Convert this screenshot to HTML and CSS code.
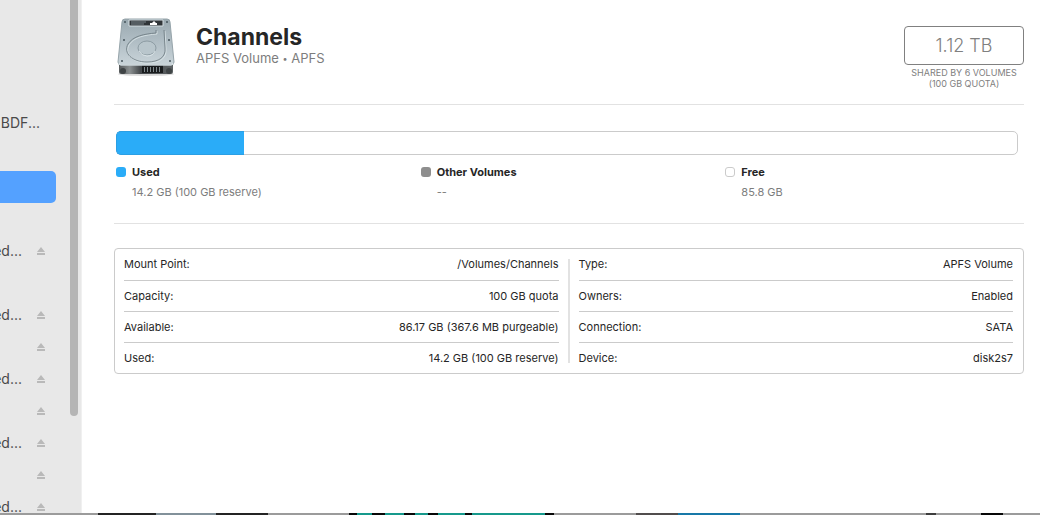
FILE: index.html
```html
<!DOCTYPE html>
<html lang="en">
<head>
    <meta charset="UTF-8">
    <meta name="viewport" content="width=device-width, initial-scale=1.0">
    <title>Channels</title>
    <link rel="stylesheet" href="styles.css">
</head>
<body>
    <svg class="symbols" aria-hidden="true">
        <symbol id="eject" viewBox="0 0 10 10">
            <path d="M5 1 L9 6 H1 Z M1 7 H9 V9 H1 Z" fill="#b9b9b9"/>
        </symbol>
    </svg>

    <div class="window">
        <aside class="sidebar">
            <ul class="volumes">
                <li class="row wide">BDF...</li>
                <li class="row"></li>
                <li class="row selected"></li>
                <li class="row"></li>
                <li class="row"><span>ed...</span><button class="eject" aria-label="Eject"><svg><use href="#eject"/></svg></button></li>
                <li class="row"></li>
                <li class="row"><span>ed...</span><button class="eject" aria-label="Eject"><svg><use href="#eject"/></svg></button></li>
                <li class="row"><button class="eject" aria-label="Eject"><svg><use href="#eject"/></svg></button></li>
                <li class="row"><span>ed...</span><button class="eject" aria-label="Eject"><svg><use href="#eject"/></svg></button></li>
                <li class="row"><button class="eject" aria-label="Eject"><svg><use href="#eject"/></svg></button></li>
                <li class="row"><span>ed...</span><button class="eject" aria-label="Eject"><svg><use href="#eject"/></svg></button></li>
                <li class="row"><button class="eject" aria-label="Eject"><svg><use href="#eject"/></svg></button></li>
                <li class="row"><span>ed...</span><button class="eject" aria-label="Eject"><svg><use href="#eject"/></svg></button></li>
            </ul>
            <div class="scrollbar"></div>
        </aside>

        <main class="content">
            <header class="header">
                <svg class="drive" viewBox="0 0 64 64" aria-hidden="true">
                    <defs>
                        <linearGradient id="plate" x1="0" y1="0" x2="0" y2="1">
                            <stop offset="0" stop-color="#9aa9b0"/>
                            <stop offset="0.5" stop-color="#b1bec5"/>
                            <stop offset="1" stop-color="#c9d4d9"/>
                        </linearGradient>
                        <linearGradient id="front" x1="0" y1="0" x2="1" y2="0">
                            <stop offset="0" stop-color="#55595b"/>
                            <stop offset="0.2" stop-color="#8b9091"/>
                            <stop offset="0.4" stop-color="#43474a"/>
                            <stop offset="1" stop-color="#5d6264"/>
                        </linearGradient>
                    </defs>
                    <ellipse cx="32" cy="59" rx="28" ry="2" fill="#000" opacity="0.15"/>
                    <path d="M5 48 H59 V57 Q59 59 57 59 H7 Q5 59 5 57 Z" fill="url(#front)"/>
                    <path d="M28 50 H49 V58 H28 Z" fill="#191c1e"/>
                    <path d="M30.500 52 V57 M33.500 52 V57 M36.500 52 V57 M39.500 52 V57 M42.500 52 V57 M45.500 52 V57" stroke="#7e888c"/>
                    <circle cx="9" cy="56" r="3" fill="#3f4446"/>
                    <circle cx="55" cy="56" r="3" fill="#3f4446"/>
                    <path d="M11 4 H53 Q56 4 56 7 L60 47 Q60 50 57 50 H7 Q4 50 4 47 L8 7 Q8 4 11 4 Z" fill="url(#plate)" stroke="#96a4aa"/>
                    <path d="M5 48 Q5 50 7 50 H57 Q59 50 59 48" fill="none" stroke="#e4ecef"/>
                    <!-- groove around the platter -->
                    <path d="M42 15 V18 C30 19 19 21 14 29 C9 38 18 47 33 47 C45 47 52 42 51 33 L50 15" fill="none" stroke="#dde7ea" stroke-width="0.8" transform="translate(1 1)"/>
                    <path d="M42 15 V18 C30 19 19 21 14 29 C9 38 18 47 33 47 C45 47 52 42 51 33 L50 15" fill="none" stroke="#6a777e" stroke-width="0.8"/>
                    <ellipse cx="33" cy="33" rx="9" ry="7" fill="#b9c6cc" stroke="#829098" stroke-width="0.8"/>
                    <path d="M25 36 Q28 41 33 41 Q39 41 41 36" fill="none" stroke="#e4edf0" stroke-width="0.8"/>
                    <path d="M15 5 H49 V11 H15 Z" fill="#303538" stroke="#d4dee2"/>
                    <path d="M17 7 H32 M17 9 H30" stroke="#7b868b"/>
                    <path d="M36 10 V8 H38 L40 6 L42 8 H43 V10 Z" fill="#fff"/>
                    <g fill="#46545b">
                        <circle cx="11" cy="7" r="1"/>
                        <circle cx="53" cy="7" r="1"/>
                        <circle cx="10" cy="25" r="1"/>
                        <circle cx="55" cy="25" r="1"/>
                        <circle cx="8" cy="46" r="1"/>
                        <circle cx="56" cy="46" r="1"/>
                    </g>
                </svg>
                <div class="title">
                    <h1>Channels</h1>
                    <p>APFS Volume <span class="dot">•</span> APFS</p>
                </div>
                <div class="capacity">
                    <div class="size">1.12 TB</div>
                    <p>SHARED BY 6 VOLUMES<br>(100 GB QUOTA)</p>
                </div>
            </header>

            <section class="usage">
                <div class="bar"><div class="fill" style="width: 14.2%"></div></div>
                <dl class="legend">
                    <div class="used"><dt>Used</dt><dd>14.2 GB (100 GB reserve)</dd></div>
                    <div class="other"><dt>Other Volumes</dt><dd>--</dd></div>
                    <div class="free"><dt>Free</dt><dd>85.8 GB</dd></div>
                </dl>
            </section>

            <section class="info">
                <table>
                    <tr><th scope="row">Mount Point:</th><td>/Volumes/Channels</td></tr>
                    <tr><th scope="row">Capacity:</th><td>100 GB quota</td></tr>
                    <tr><th scope="row">Available:</th><td>86.17 GB (367.6 MB purgeable)</td></tr>
                    <tr><th scope="row">Used:</th><td>14.2 GB (100 GB reserve)</td></tr>
                </table>
                <div class="separator"></div>
                <table>
                    <tr><th scope="row">Type:</th><td>APFS Volume</td></tr>
                    <tr><th scope="row">Owners:</th><td>Enabled</td></tr>
                    <tr><th scope="row">Connection:</th><td>SATA</td></tr>
                    <tr><th scope="row">Device:</th><td>disk2s7</td></tr>
                </table>
            </section>
        </main>
    </div>
    <div class="desktop"></div>
</body>
</html>
```

FILE: styles.css
```css
*, *::before {
    box-sizing: border-box;
}
body {
    display: flex;
    flex-direction: column;
    height: 100vh;
    margin: 0;
    overflow: hidden;
    font-family: Inter, "Liberation Sans", sans-serif;
    font-size: 11px;
    color: #262626;
    background: #fff;
}
h1, p, ul, dl, dd {
    margin: 0;
    padding: 0;
}
.symbols {
    display: none;
}
.window {
    display: flex;
    flex: 1;
    min-height: 0;
}

/* sidebar */
.sidebar {
    display: flex;
    flex: none;
    background: #e8e8e8;
    border-right: 1px solid #f0f0f0;
    overflow: hidden;
}
.volumes {
    width: 56px;
    padding-top: 107px;
    list-style: none;
    font-size: 14px;
    color: #4a4a4a;
}
.row {
    display: flex;
    align-items: center;
    justify-content: flex-end;
    gap: 14px;
    height: 32px;
    padding: 0 10px 2px 0;
}
.row.wide {
    padding-right: 16px;
}
.row.selected {
    background: #54a1ff;
    border-radius: 0 5px 5px 0;
}
.eject {
    flex: none;
    width: 10px;
    height: 10px;
    margin-top: 2px;
    padding: 0;
    border: none;
    background: none;
}
.eject svg {
    display: block;
    width: 10px;
    height: 10px;
}
.scrollbar {
    width: 8px;
    height: 81%;
    margin: 0 3px 0 14px;
    background: #b5b5b5;
    border-radius: 0 0 4px 4px;
}

/* volume details */
.content {
    flex: 1;
    padding: 15px 16px 0 32px;
}
.header {
    display: flex;
    height: 90px;
    border-bottom: 1px solid #e2e2e2;
}
.drive {
    width: 64px;
    height: 64px;
}
.title {
    flex: 1;
    padding: 8px 0 0 18px;
}
.title h1 {
    font-size: 23px;
    line-height: 28px;
}
.title p {
    font-size: 13px;
    line-height: 15px;
    color: #7d7d7d;
}
.title .dot {
    font-size: 9px;
    vertical-align: 1px;
}
.capacity {
    width: 120px;
    padding-top: 11px;
    text-align: center;
    color: #808080;
}
.size {
    border: 1px solid #808080;
    border-radius: 4px;
    font-size: 18px;
    font-weight: 300;
    line-height: 37px;
}
.capacity p {
    padding-top: 2px;
    font-size: 9px;
    line-height: 11px;
}
.usage {
    padding: 26px 6px 21px 2px;
    border-bottom: 1px solid #e2e2e2;
}
.bar {
    height: 24px;
    border: 1px solid #cbcbcb;
    border-radius: 5px;
}
.fill {
    height: 24px;
    margin: -1px;
    background: #2aacf8;
    border: 1px solid #2b9fe4;
    border-right: none;
    border-radius: 5px 0 0 5px;
}
.legend {
    display: grid;
    grid-template-columns: repeat(3, 1fr);
    gap: 12px;
    padding-top: 7px;
}
.legend dt {
    display: flex;
    align-items: center;
    gap: 6px;
    font-weight: bold;
    line-height: 20px;
}
.legend dt::before {
    content: "";
    width: 10px;
    height: 10px;
    border-radius: 3px;
    background: #2aacf8;
}
.legend .other dt::before {
    background: #8e8e8e;
}
.legend .free dt::before {
    background: #fff;
    border: 1px solid #cbcbcb;
}
.legend dd {
    padding-left: 16px;
    line-height: 20px;
    color: #7d7d7d;
}
.info {
    display: flex;
    gap: 9px;
    margin-top: 24px;
    padding: 0 10px 0 9px;
    border: 1px solid #cbcbcb;
    border-radius: 4px;
}
.info table {
    flex: 1;
    border-collapse: collapse;
}
.info th, .info td {
    height: 31px;
    padding: 0;
}
.info tr + tr {
    border-top: 1px solid #cbcbcb;
}
.info th {
    font-weight: normal;
    text-align: left;
}
.info td {
    text-align: right;
}
.separator {
    width: 2px;
    margin: 10px 0;
    background: #e2e2e2;
}

/* sliver of the desktop under the window */
.desktop {
    flex: none;
    height: 2px;
    background: linear-gradient(to right,
        #9b9b9b 9.4%, #242424 9.4% 15%, #82919a 15% 20.8%, #242424 20.8% 25.8%,
        #9b9b9b 25.8% 33.6%, #080808 33.6% 34.3%, #16998c 34.3% 35.8%, #080808 35.8% 37%,
        #16998c 37% 38.8%, #080808 38.8% 39.9%, #16998c 39.9% 41.2%, #080808 41.2% 42.1%,
        #16998c 42.1% 44.7%, #080808 44.7% 45.4%, #16998c 45.4% 52.4%, #080808 52.4% 53.3%,
        #9b9b9b 53.3% 61.2%, #514d4d 61.2% 65.2%, #1878a8 65.2% 71.2%, #9b9b9b 71.2% 89%,
        #3d3d3d 89% 90%, #9b9b9b 90% 94.3%, #080808 94.3% 96.4%, #9b9b9b 96.4%);
}
```
